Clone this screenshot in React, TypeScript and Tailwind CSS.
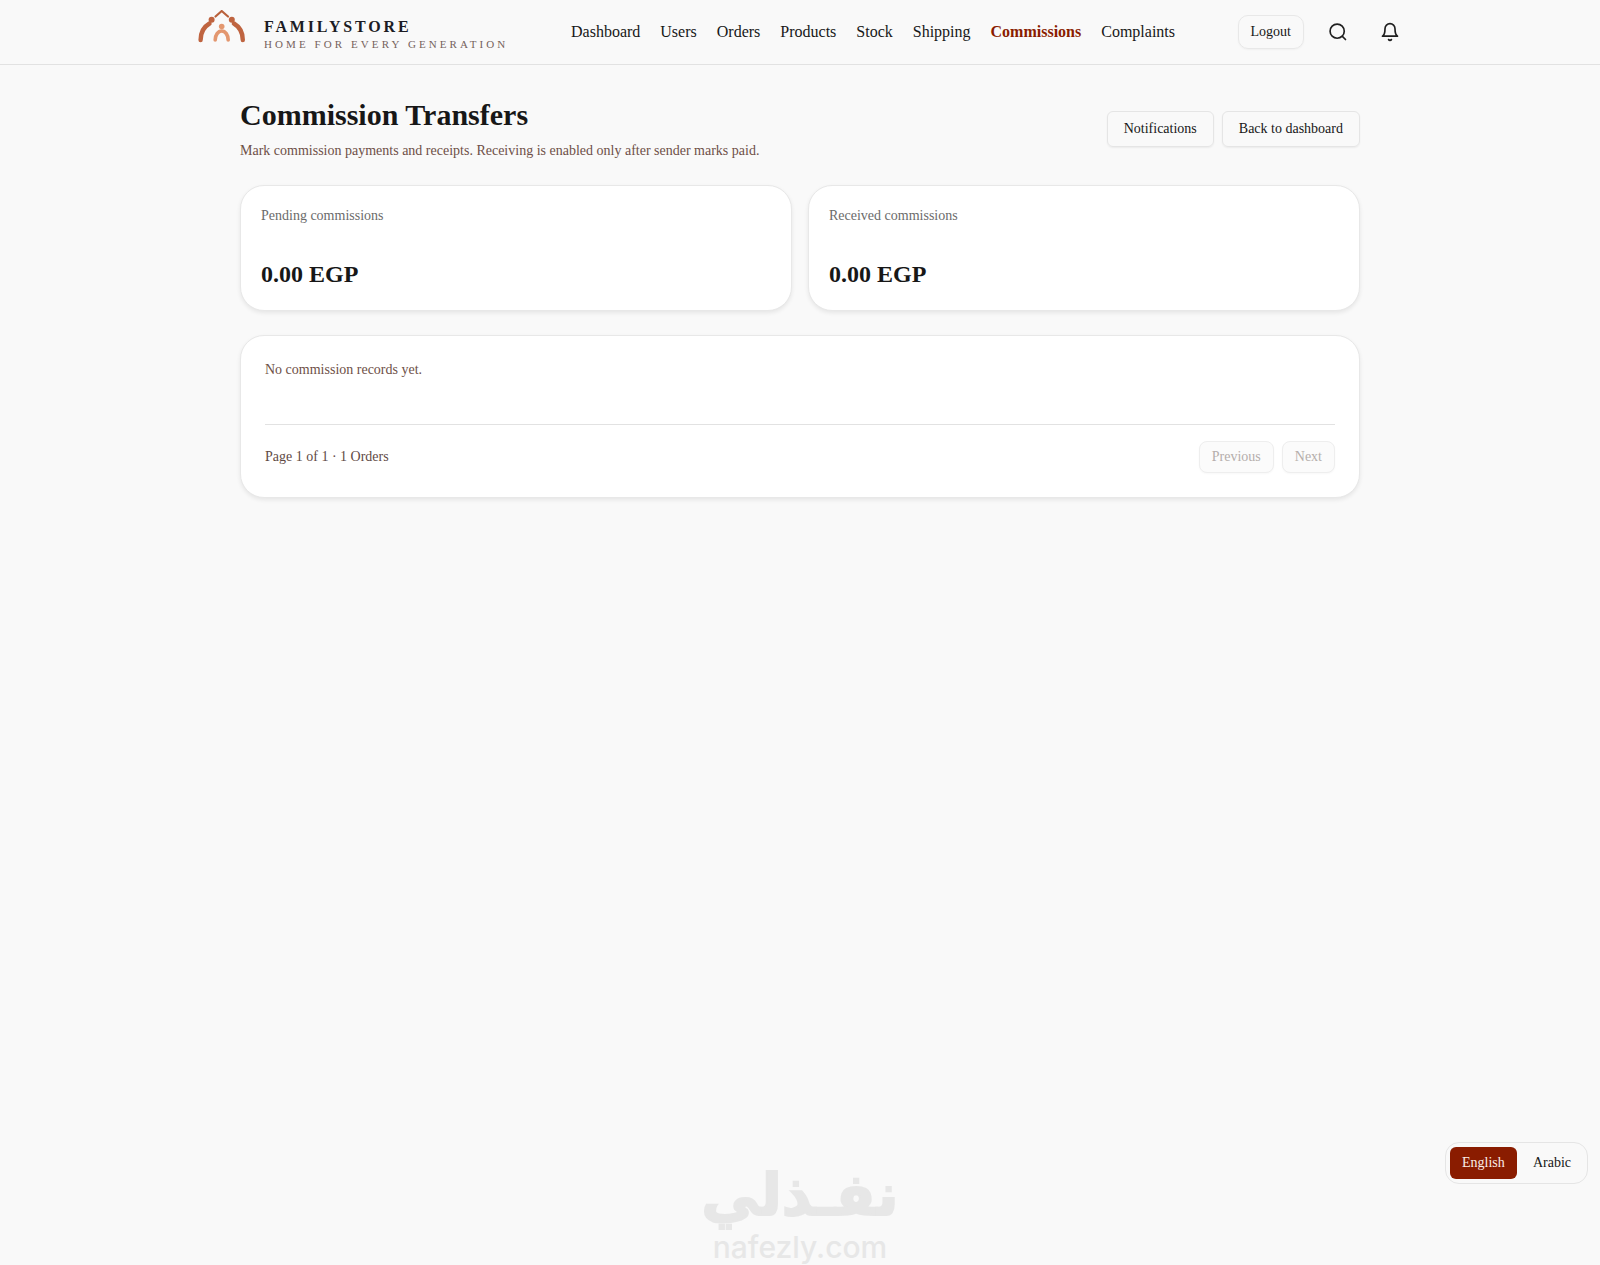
import React from "react";

const navItems = ["Dashboard", "Users", "Orders", "Products", "Stock", "Shipping", "Commissions", "Complaints"];

const Logo = () => (
  <svg className="mb-[12px]" width="48" height="33" viewBox="0 0 48 33" fill="none" strokeLinecap="round" strokeLinejoin="round">
    <path d="M17.5 6.5 23.7 1l6.3 5.5" stroke="#b9613c" strokeWidth="2.2" />
    <path d="M2.6 30C2.6 22 5.5 17 11.5 13.5" stroke="#bf6440" strokeWidth="4.4" />
    <circle cx="13.6" cy="9.8" r="3" fill="#bf6440" />
    <path d="M44.8 30C44.8 22 41.9 17 35.9 13.5" stroke="#bf6440" strokeWidth="4.4" />
    <circle cx="33.8" cy="9.8" r="3" fill="#bf6440" />
    <circle cx="23.7" cy="16.5" r="2.8" fill="#e3976f" />
    <path d="M17.2 30c0-5 2.9-9 6.5-9s6.5 4 6.5 9" stroke="#e3976f" strokeWidth="3.6" />
  </svg>
);

const Stat = ({ label }: { label: string }) => (
  <div className="h-[126px] rounded-[24px] border border-[#e8e8e8] bg-white px-5 pt-5 shadow-[0_2px_4px_rgba(0,0,0,0.08)]">
    <p className="text-sm leading-[20px] text-[#6b6b6b]">{label}</p>
    <p className="mt-8 text-2xl font-bold leading-[32px] text-[#171717]">0.00 EGP</p>
  </div>
);

export default function App() {
  return (
    <div className="relative min-h-[1265px] overflow-hidden bg-[#f9f9f9] font-['Liberation_Serif',serif] text-[#171717]">
      <header className="h-[65px] border-b border-[#e2e2e2]">
        <div className="mx-auto flex h-[64px] w-[1204px] items-center">
          <Logo />
          <div className="ml-[18px] w-[307px] pt-[6px]">
            <p className="text-base font-bold leading-[18px] tracking-[2.85px] text-[#1c1c24]">FAMILYSTORE</p>
            <p className="text-[11px] leading-[16px] tracking-[0.28em] text-[#75625c]">HOME FOR EVERY GENERATION</p>
          </div>
          <nav className="flex items-center gap-5 text-base">
            {navItems.map((item) => (
              <a key={item} className={item === "Commissions" ? "font-bold text-[#8a1c00]" : "text-[#171717]"}>
                {item}
              </a>
            ))}
          </nav>
          <div className="ml-auto mr-[2px] flex items-center">
            <button className="h-[34px] rounded-[10px] border border-[#e8e8e8] px-3 text-sm shadow-[0_1px_2px_rgba(0,0,0,0.04)]">
              Logout
            </button>
            <svg className="ml-[24px]" width="20" height="20" viewBox="0 0 24 24" fill="none" stroke="#1f1f1f" strokeWidth="2" strokeLinecap="round">
              <circle cx="11" cy="11" r="8.5" />
              <path d="m21 21-3.8-3.8" />
            </svg>
            <svg className="ml-[32px]" width="20" height="20" viewBox="0 0 24 24" fill="none" stroke="#1f1f1f" strokeWidth="2" strokeLinecap="round" strokeLinejoin="round">
              <path d="M6 8a6 6 0 0 1 12 0c0 7 3 9 3 9H3s3-2 3-9" />
              <path d="M10.3 21a1.94 1.94 0 0 0 3.4 0" />
            </svg>
          </div>
        </div>
      </header>

      <main className="mx-auto w-[1120px] pt-8">
        <div className="flex items-center justify-between">
          <div>
            <h1 className="text-3xl font-bold leading-[36px]">Commission Transfers</h1>
            <p className="mt-2 text-sm leading-[20px] text-[#6e4f47]">
              Mark commission payments and receipts. Receiving is enabled only after sender marks paid.
            </p>
          </div>
          <div className="flex gap-2">
            <button className="h-[36px] rounded-[6px] border border-[#e5e5e5] px-4 text-sm shadow-[0_1px_2px_rgba(0,0,0,0.06)]">
              Notifications
            </button>
            <button className="h-[36px] rounded-[6px] border border-[#e5e5e5] px-4 text-sm shadow-[0_1px_2px_rgba(0,0,0,0.06)]">
              Back to dashboard
            </button>
          </div>
        </div>

        <div className="mt-6 grid grid-cols-2 gap-4">
          <Stat label="Pending commissions" />
          <Stat label="Received commissions" />
        </div>

        <section className="mt-6 h-[163px] rounded-[24px] border border-[#e8e8e8] bg-white px-6 pt-6 shadow-[0_2px_4px_rgba(0,0,0,0.08)]">
          <p className="text-sm leading-[20px] text-[#6e4f47]">No commission records yet.</p>
          <div className="mt-[44px] flex items-center justify-between border-t border-[#e2e2e2] pt-4">
            <p className="text-sm text-[#5f4a45]">Page 1 of 1 · 1 Orders</p>
            <div className="flex gap-2">
              <button className="h-[32px] rounded-[8px] border border-[#eeeeee] bg-[#fbfbfb] px-3 text-sm text-[#b5aeab] shadow-[0_1px_2px_rgba(0,0,0,0.03)]">
                Previous
              </button>
              <button className="h-[32px] rounded-[8px] border border-[#eeeeee] bg-[#fbfbfb] px-3 text-sm text-[#b5aeab] shadow-[0_1px_2px_rgba(0,0,0,0.03)]">
                Next
              </button>
            </div>
          </div>
        </section>
      </main>

      <div className="absolute bottom-[81px] right-[12px] flex h-[42px] items-center gap-1 rounded-[14px] border border-[#e5e5e5] bg-[#f9f9f9] px-1">
        <button className="h-[32px] w-[67px] rounded-[6px] bg-[#8a1c00] text-sm text-[#fbeee8]">English</button>
        <button className="h-[32px] px-3 text-sm text-[#171717]">Arabic</button>
      </div>

      <div className="absolute bottom-0 left-[700px] w-[200px] text-center font-['DejaVu_Sans',sans-serif] text-[#e7e7e7]">
        <p dir="rtl" className="whitespace-nowrap text-[58px] font-bold leading-[68px] [-webkit-text-stroke:2px_#e7e7e7]">نفـذلي</p>
        <p className="font-['Inter',sans-serif] text-[30px] font-medium leading-[36px]">nafezly.com</p>
      </div>
    </div>
  );
}
